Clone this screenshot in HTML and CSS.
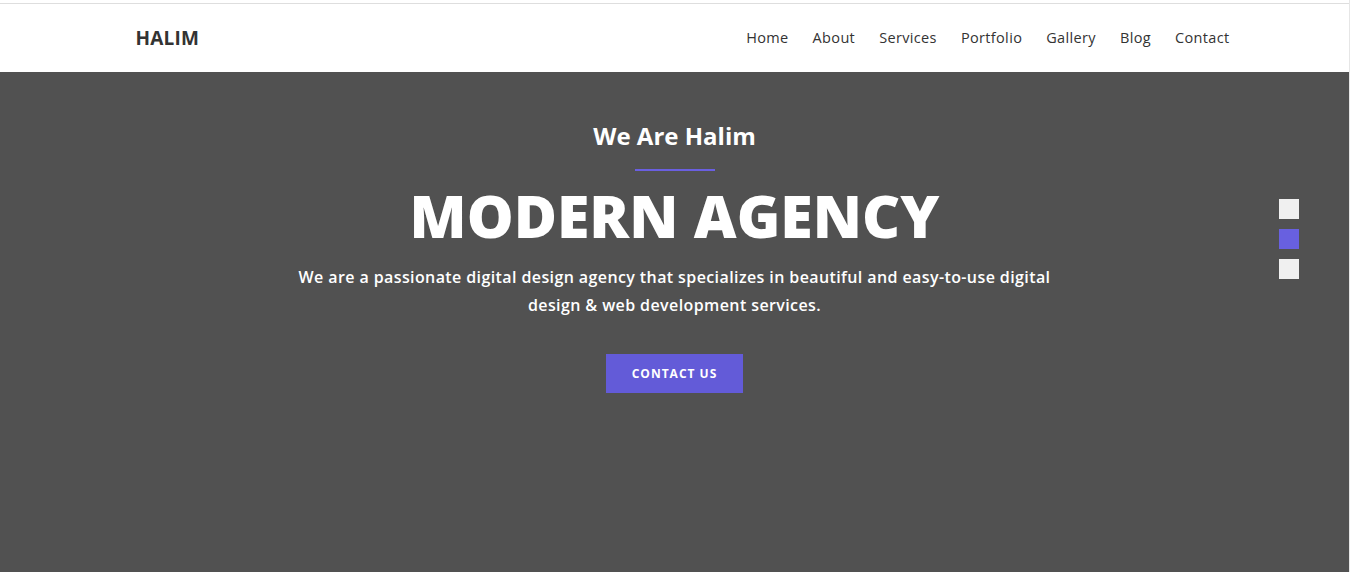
FILE: index.html
```html
<!DOCTYPE html>
<html lang="en">
<head>
<meta charset="utf-8">
<title>Halim</title>
<link rel="stylesheet" href="styles.css">
</head>
<body>
<div class="page">
  <header class="navbar">
    <div class="container nav-inner">
      <a class="logo" href="#">HALIM</a>
      <nav class="menu">
        <a href="#">Home</a>
        <a href="#">About</a>
        <a href="#">Services</a>
        <a href="#">Portfolio</a>
        <a href="#">Gallery</a>
        <a href="#">Blog</a>
        <a href="#">Contact</a>
      </nav>
    </div>
  </header>
  <section class="hero">
    <div class="hero-content">
      <h3 class="hero-sub">We Are Halim</h3>
      <div class="hero-line"></div>
      <h1 class="hero-title">MODERN AGENCY</h1>
      <p class="hero-text">We are a passionate digital design agency that specializes in beautiful and easy-to-use digital design &amp; web development services.</p>
      <a class="btn" href="#">CONTACT US</a>
    </div>
    <div class="dots">
      <span class="dot"></span>
      <span class="dot active"></span>
      <span class="dot"></span>
    </div>
  </section>
</div>
</body>
</html>
```
FILE: styles.css
```css
html, body {
  margin: 0;
  padding: 0;
  height: 100%;
  overflow: hidden;
}
body {
  background: #ffffff;
  font-family: "Open Sans", "Liberation Sans", sans-serif;
}
.page {
  height: 100%;
  display: flex;
  flex-direction: column;
  padding-top: 3px;
  box-sizing: border-box;
  border-right: 1px solid #e6e6e6;
}
.navbar {
  background: #fff;
  border-top: 1px solid #dedede;
  height: 68px;
  flex: none;
}
.container {
  width: 1110px;
  margin: 0 auto;
}
.nav-inner {
  height: 100%;
  display: flex;
  align-items: center;
  justify-content: space-between;
}
.logo {
  color: #333;
  font-weight: 700;
  font-size: 19px;
  text-decoration: none;
  margin-left: 16px;
  letter-spacing: 0.2px;
}
.menu {
  display: flex;
  gap: 24px;
  margin-top: -1px;
}
.menu a {
  color: #333;
  font-size: 14.5px;
  letter-spacing: 0.35px;
  text-decoration: none;
}
.hero {
  flex: 1;
  background: #515151;
  display: flex;
  justify-content: center;
  position: relative;
}
.hero-content {
  display: flex;
  flex-direction: column;
  align-items: center;
  text-align: center;
  padding-top: 46px;
  width: 760px;
}
.hero-sub {
  margin: 0;
  color: #fff;
  font-size: 24px;
  font-weight: 700;
  line-height: 36px;
}
.hero-line {
  width: 80px;
  height: 2px;
  background: #6a5fe0;
  margin-top: 15px;
}
.hero-title {
  margin: 9px 0 0;
  color: #fff;
  font-size: 59px;
  font-weight: 800;
  line-height: 70px;
}
.hero-text {
  margin: 13px 0 0;
  color: #fff;
  font-size: 16px;
  font-weight: 600;
  letter-spacing: 0.4px;
  line-height: 28px;
}
.btn {
  margin-top: 35px;
  background: #635bd8;
  color: #fff;
  font-size: 12px;
  font-weight: 700;
  letter-spacing: 1px;
  text-decoration: none;
  width: 137px;
  height: 39px;
  display: flex;
  align-items: center;
  justify-content: center;
}
.dots {
  position: absolute;
  right: 50px;
  top: 127px;
  display: flex;
  flex-direction: column;
  gap: 10px;
}
.dot {
  width: 20px;
  height: 20px;
  background: #f0f0f0;
}
.dot.active {
  background: #6860e0;
}
```
